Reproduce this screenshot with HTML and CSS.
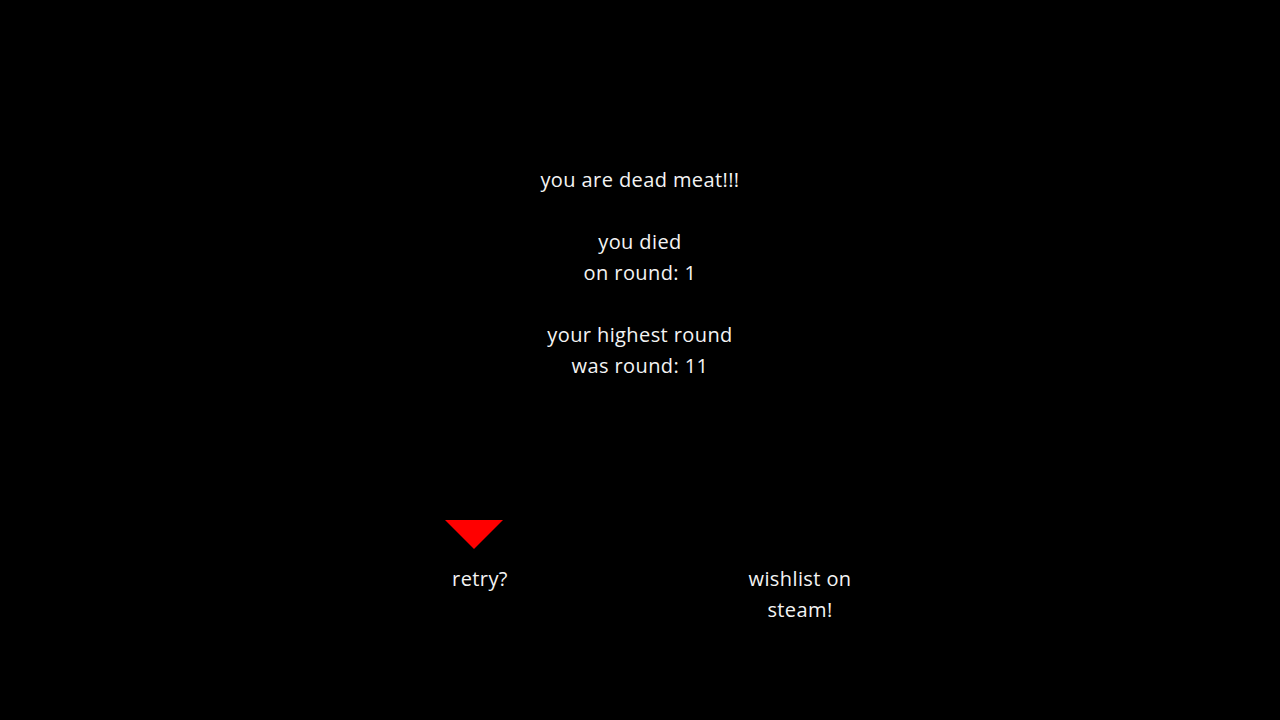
FILE: index.html
```html
<!DOCTYPE html>
<html lang="en">
<head>
  <meta charset="UTF-8" />
  <meta name="viewport" content="width=device-width, initial-scale=1" />
  <title>Game Over</title>
  <link rel="stylesheet" href="styles.css">
</head>
<body>
  <div class="screen">
    <div class="summary">
      <p>you are dead meat!!!</p>
      <p>you died<br>on round: 1</p>
      <p>your highest round<br>was round: 11</p>
    </div>

    <div class="choices">
      <div class="choice selected">
        <div class="cursor"></div>
        <span>retry?</span>
      </div>
      <div class="choice">
        <div class="cursor"></div>
        <span>wishlist on<br>steam!</span>
      </div>
    </div>
  </div>
</body>
</html>
```

FILE: styles.css
```css
* {
  margin: 0;
  padding: 0;
  box-sizing: border-box;
}

body {
  background: #000;
  color: #f4f4f4;
  font-family: 'Open Sans', 'Noto Sans', sans-serif;
  font-size: 20px;
  letter-spacing: 0.4px;
  line-height: 31px;
  height: 100vh;
}

.screen {
  display: flex;
  flex-direction: column;
  align-items: center;
  padding-top: 164px;
}

.summary {
  display: flex;
  flex-direction: column;
  gap: 31px;
  text-align: center;
}

.choices {
  display: flex;
  justify-content: center;
  gap: 120px;
  margin-top: 139px;
}

.choice {
  width: 200px;
  display: flex;
  flex-direction: column;
  align-items: center;
  text-align: center;
}

/* red pointer above the highlighted option */
.cursor {
  width: 0;
  height: 0;
  border-left: 29px solid transparent;
  border-right: 29px solid transparent;
  border-top: 29px solid transparent;
  margin-bottom: 14px;
  margin-right: 12px;
}

.choice.selected .cursor {
  border-top-color: #ff0000;
}
```
